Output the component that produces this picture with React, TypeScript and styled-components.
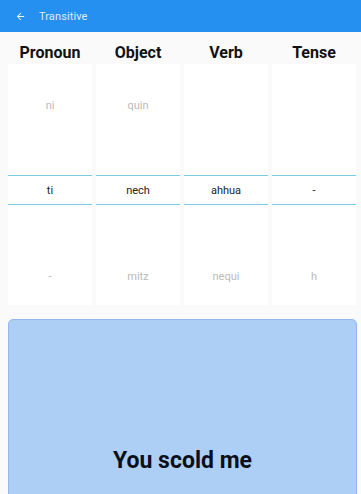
import React from "react";
import styled, { createGlobalStyle } from "styled-components";

const Global = createGlobalStyle`
  html, body { margin: 0; padding: 0; background: #fafafa; }
  body { font-family: Roboto, "Noto Sans", Arial, sans-serif; overflow: hidden; }
`;

const Page = styled.div`
  width: 361px;
  height: 494px;
  overflow: hidden;
  display: flex;
  flex-direction: column;
  background: #fafafa;
`;

const Toolbar = styled.div`
  height: 32px;
  flex-shrink: 0;
  background: #2690f0;
  display: flex;
  align-items: center;
  padding-left: 15px;
  gap: 13px;
  box-sizing: border-box;
`;

const Title = styled.span`
  color: #dceefe;
  font-size: 11px;
  letter-spacing: 0.1px;
`;

const Grid = styled.div`
  flex-shrink: 0;
  display: grid;
  grid-template-columns: repeat(4, 84px);
  column-gap: 4px;
  padding: 0 0 0 8px;
`;

const Head = styled.div`
  height: 32px;
  display: flex;
  align-items: flex-end;
  justify-content: center;
  padding-bottom: 2px;
  box-sizing: border-box;
  font-weight: 700;
  font-size: 16px;
  color: #111;
`;

const Column = styled.div`
  background: #fff;
  display: flex;
  flex-direction: column;
  height: 241px;
`;

const Pane = styled.div<{ $h: number; $top: number }>`
  height: ${(p) => p.$h}px;
  box-sizing: border-box;
  padding-top: ${(p) => p.$top}px;
  text-align: center;
  font-size: 11px;
  color: #bababa;
  line-height: 13px;
`;

const Selected = styled.div`
  height: 28px;
  border-top: 1px solid #7ccbe2;
  border-bottom: 1px solid #7ccbe2;
  display: flex;
  align-items: center;
  justify-content: center;
  font-size: 11px;
  color: #222;
`;

const Card = styled.div`
  flex-shrink: 0;
  margin: 14px 4px 0 8px;
  height: 280px;
  background: #aecff5;
  border: 1.5px solid #92b7ef;
  border-radius: 5px;
  box-sizing: border-box;
  display: flex;
  align-items: center;
  justify-content: center;
`;

const Phrase = styled.div`
  font-weight: 700;
  font-size: 23px;
  color: #0b0f1a;
  margin-top: 2px;
`;

const cols = [
  { head: "Pronoun", prev: "ni", cur: "ti", next: "-" },
  { head: "Object", prev: "quin", cur: "nech", next: "mitz" },
  { head: "Verb", prev: "", cur: "ahhua", next: "nequi" },
  { head: "Tense", prev: "", cur: "-", next: "h" },
];

export default function App() {
  return (
    <Page>
      <Global />
      <Toolbar>
        <svg width="11" height="11" viewBox="0 0 24 24">
          <path
            d="M20 11H7.83l5.59-5.59L12 4l-8 8 8 8 1.41-1.41L7.83 13H20v-2z"
            fill="#eaf4ff"
          />
        </svg>
        <Title>Transitive</Title>
      </Toolbar>
      <Grid>
        {cols.map((c) => (
          <Head key={c.head}>{c.head}</Head>
        ))}
        {cols.map((c) => (
          <Column key={c.head + "c"}>
            <Pane $h={111} $top={35}>{c.prev}</Pane>
            <Selected>{c.cur}</Selected>
            <Pane $h={100} $top={65}>{c.next}</Pane>
          </Column>
        ))}
      </Grid>
      <Card>
        <Phrase>You scold me</Phrase>
      </Card>
    </Page>
  );
}
